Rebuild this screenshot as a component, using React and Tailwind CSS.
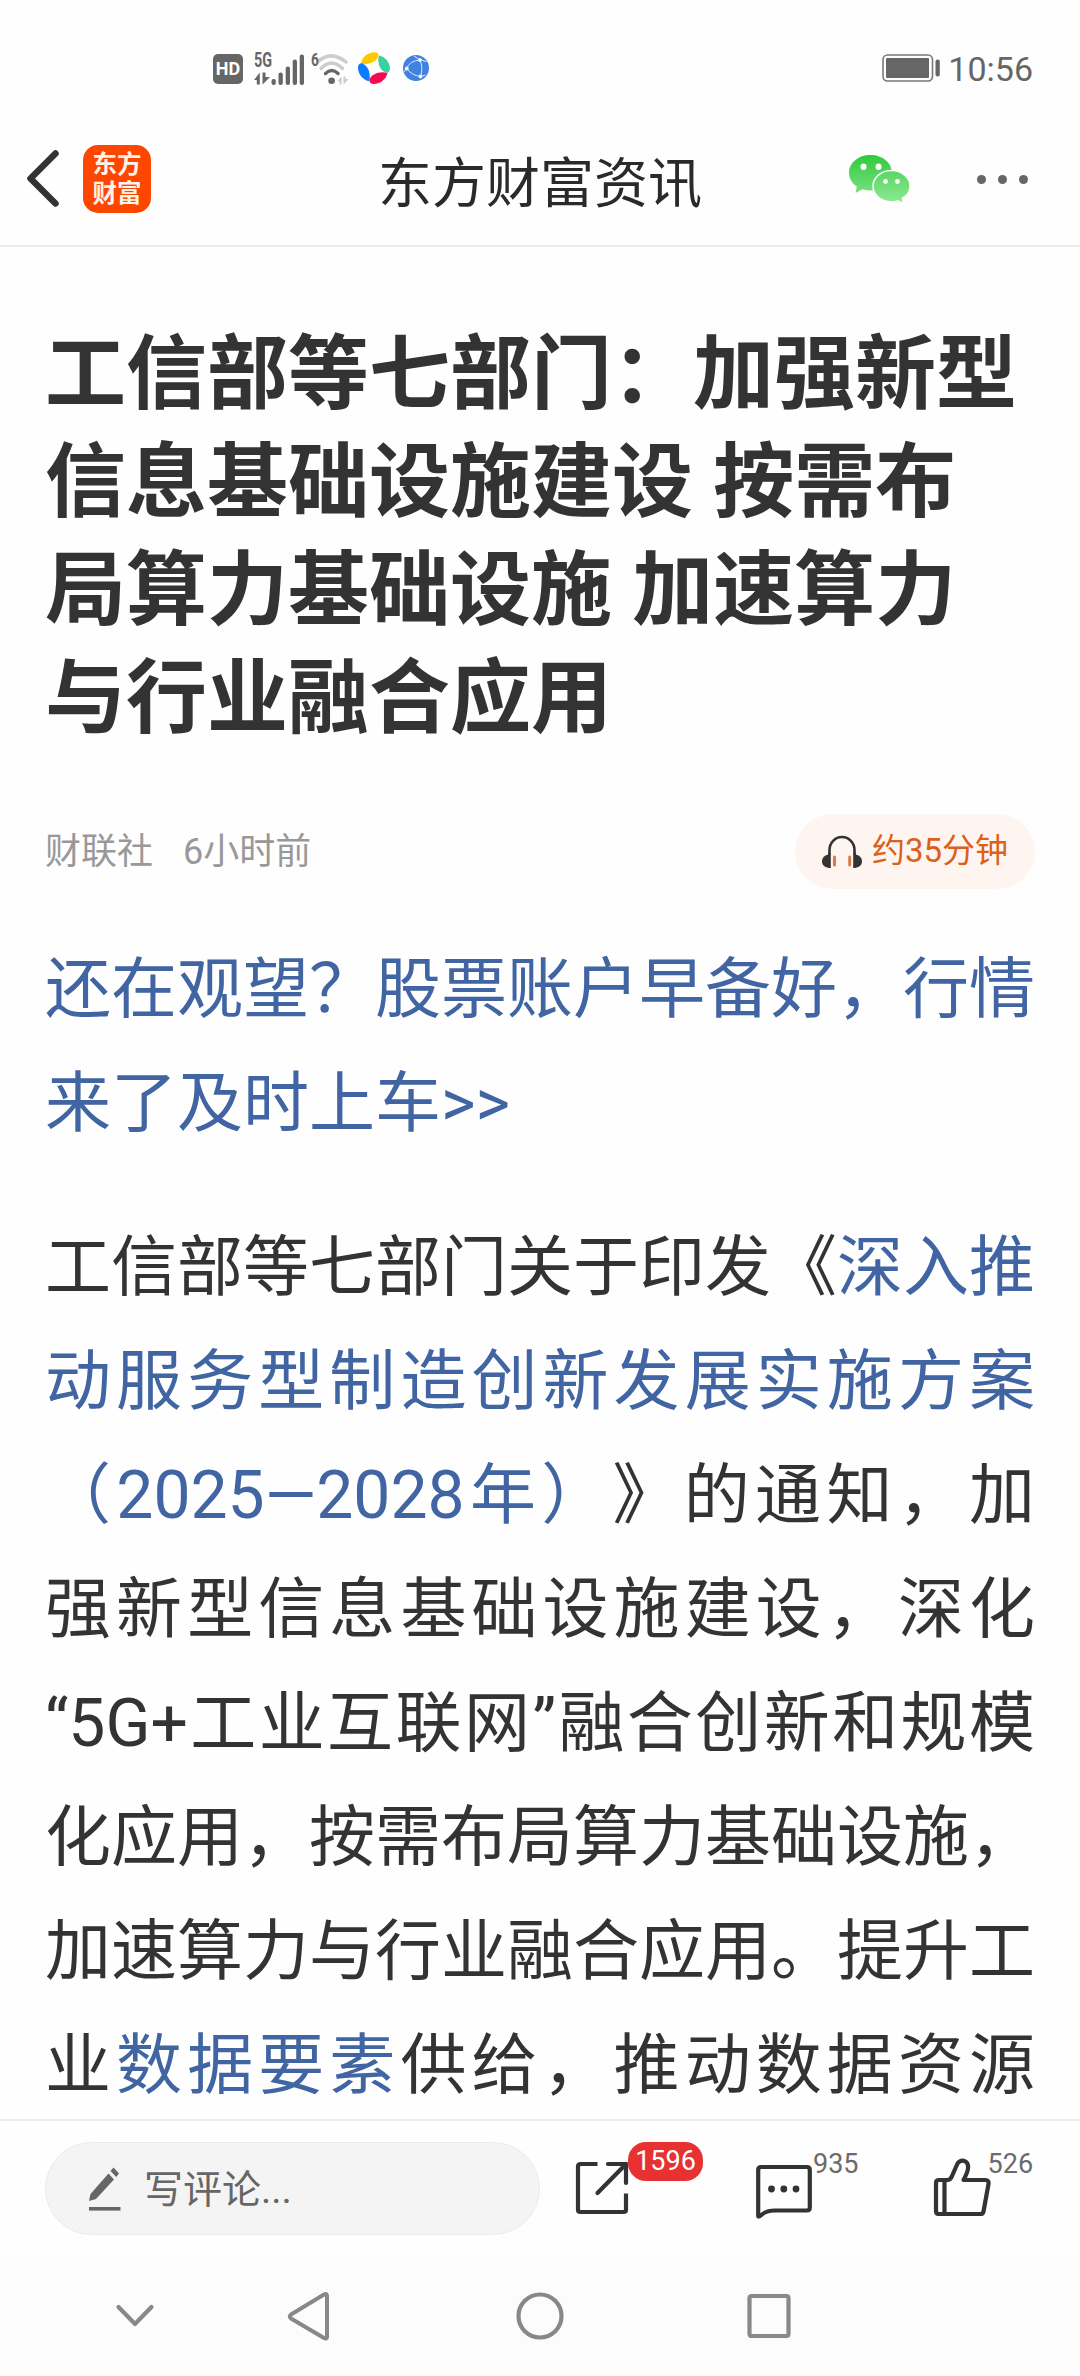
function SignalIcons() {
  return (
    <svg width="64" height="40" viewBox="0 0 64 40" fill="#666">
      <path d="M0 30L5.800 22.500V34.500H2.800V30zM8.500 22.500v12l7.500-7.500h-4.500V22.500z" />
      <rect x="17.500" y="29" width="4.300" height="6" rx="2" />
      <rect x="24.500" y="22.500" width="4.300" height="12.500" rx="2" />
      <rect x="31.700" y="16.500" width="4.300" height="18.500" rx="2" />
      <rect x="38.700" y="9.500" width="4.300" height="25.500" rx="2" />
      <rect x="45.700" y="4.500" width="4.300" height="30.500" rx="2" />
    </svg>
  );
}

function WifiIcon() {
  return (
    <svg width="34" height="32" viewBox="0 0 34 32" fill="none" strokeWidth="3.400" strokeLinecap="round">
      <path d="M3 7.500Q16 -4 31 8" stroke="#ccc" />
      <path d="M6 14.500Q16.500 3.500 27.500 14.500" stroke="#ccc" />
      <path d="M10.500 19.500Q16.800 13.500 23 19.500" stroke="#666" />
      <circle cx="16.600" cy="26.700" r="3.300" fill="#666" />
      <path d="M22 27.500l4.500-5v8h-2v-3.500zM28.500 22.500v8l5-5.500h-3v-2.500z" fill="#ccc" />
    </svg>
  );
}

function PinwheelIcon() {
  return (
    <svg width="34" height="34" viewBox="0 0 34 34">
      <path d="M4 12.500C5 6 10.500 1.500 17.500 1.300q5 .2 3.800 4.200Q19.500 10 14 12 8 14 4 12.500z" fill="#ffc800" />
      <path d="M22 4.500c6.500 1.500 10.800 7 11 13q-.5 5-4.500 4Q24 19.500 22 14 20.500 8 22 4.500z" fill="#3ad0a0" />
      <path d="M30.500 22C29 28.500 23.500 32.800 16.500 33q-5-.5-4-5Q14.500 24 20 22 26 20.500 30.500 22z" fill="#f5094f" />
      <path d="M12 30.200C5 28.500 1.200 23 1 16.500q.5-5 4.500-4Q10 14.500 12 20 13.500 26 12 30.200z" fill="#0a7cff" />
    </svg>
  );
}

function GlobeIcon() {
  return (
    <svg width="28" height="28" viewBox="0 0 28 28" fill="none" stroke="#dbe9ff" strokeWidth="1">
      <circle cx="14" cy="14" r="13" fill="#3f82e0" stroke="none" />
      <path d="M18 6Q8 6.500 4.500 14.500 10 21.500 18.500 22.500M18 6Q21.500 14 18.500 22.500M18 6L12 2M18 6l6.500 1.500M4.500 14.500L2 18M18.500 22.500l5-1.500" />
      <circle cx="18" cy="6" r="1.600" fill="#fff" />
      <circle cx="4.800" cy="14.500" r="1.600" fill="#fff" />
      <circle cx="18.500" cy="22.500" r="1.600" fill="#fff" />
    </svg>
  );
}

function StatusBar() {
  return (
    <div className="flex h-[108px] items-start pt-[50px] text-[#666]">
      <div className="ml-[213px] mt-[4px] flex h-[30px] w-[30px] items-center justify-center rounded-[5px] bg-[#666] text-[18px] font-bold leading-none text-white">
        HD
      </div>
      <div className="relative ml-[11px] h-[40px] w-[57px]">
        <SignalIcons />
        <span className="absolute left-0 top-[1px] origin-left scale-x-[0.72] text-[20px] font-bold leading-[18px]">5G</span>
      </div>
      <span className="mt-[1px] w-[8px] origin-left scale-x-[0.72] text-[19px] font-bold leading-[18px]">6</span>
      <div className="-ml-[4px] mt-[4px] h-[32px] w-[34px]"><WifiIcon /></div>
      <div className="ml-[8px] mt-[1px]"><PinwheelIcon /></div>
      <div className="ml-[11px] mt-[4px]"><GlobeIcon /></div>
      <div className="ml-auto mr-[47px] flex">
        <svg className="mt-[3px]" width="60" height="30" viewBox="0 0 60 30">
          <rect x="2" y="2" width="49.500" height="26" rx="4.500" fill="none" stroke="#777" strokeWidth="1.600" />
          <rect x="5" y="5" width="43" height="20" rx="1" fill="#666" />
          <rect x="54.500" y="6.500" width="4.300" height="17" rx="2" fill="#666" />
        </svg>
        <span className="ml-[7px] text-[34px] leading-[38px]">10:56</span>
      </div>
    </div>
  );
}

function WeChatIcon() {
  return (
    <svg width="66" height="54" viewBox="0 0 66 54">
      <defs>
        <linearGradient id="bubble-back" x1="0" y1="0" x2="0" y2="1">
          <stop offset="0" stopColor="#2fca3c" />
          <stop offset="1" stopColor="#79e080" />
        </linearGradient>
        <linearGradient id="bubble-front" x1="0" y1="0" x2="0" y2="1">
          <stop offset="0" stopColor="#5bd564" />
          <stop offset="1" stopColor="#8eea94" />
        </linearGradient>
      </defs>
      <path d="M23.500 2C11.500 2 2 9.800 2 19.700c0 5.600 3 10.600 7.800 13.800L8.500 40l7-3.800c2.500.8 5.200 1.200 8 1.200 12 0 21.500-7.900 21.500-17.700S35.500 2 23.500 2z" fill="url(#bubble-back)" />
      <path d="M44.500 17.500C34.200 17.500 26 24.500 26 33.200s8.200 15.600 18.500 15.600c2.200 0 4.300-.3 6.200-.9l6 2.900-1.300-5.300c4.700-2.900 7.700-7.300 7.700-12.300 0-8.700-8.300-15.700-18.600-15.700z" fill="url(#bubble-front)" stroke="#fff" strokeWidth="1.500" />
      <g fill="#fff">
        <ellipse cx="16.500" cy="13.700" rx="3" ry="3.200" />
        <ellipse cx="31.500" cy="13.700" rx="3" ry="3.200" />
        <circle cx="38.500" cy="28.500" r="2.400" />
        <circle cx="50.500" cy="28.500" r="2.400" />
      </g>
    </svg>
  );
}

function Header() {
  return (
    <header className="relative flex h-[139px] items-center border-b-2 border-[#ececec]">
      <svg className="ml-[24px] mt-[3px]" width="40" height="62" viewBox="0 0 40 62" fill="none" stroke="#333" strokeWidth="6.500" strokeLinecap="round" strokeLinejoin="round">
        <path d="M31.500 6.500L6.500 31.500 31.500 56.500" />
      </svg>
      <div className="ml-[19px] mt-[5px] flex h-[68px] w-[68px] flex-col items-center justify-center rounded-[15px] bg-[#fd4600] text-[24.500px] font-bold leading-[29.500px] text-[#fff3e8]">
        <span>东方</span>
        <span>财富</span>
      </div>
      <h1 className="absolute inset-x-0 top-[37px] text-center text-[54px] leading-[80px] text-[#2a2a2a]">东方财富资讯</h1>
      <div className="ml-auto mr-[64px] mt-[6px]"><WeChatIcon /></div>
      <div className="mr-[52px] mt-[6px] flex gap-[12px]">
        <i className="h-[9px] w-[9px] rounded-full bg-[#666]" />
        <i className="h-[9px] w-[9px] rounded-full bg-[#666]" />
        <i className="h-[9px] w-[9px] rounded-full bg-[#666]" />
      </div>
    </header>
  );
}

function HeadphonesIcon() {
  return (
    <svg width="42" height="34" viewBox="0 0 42 34">
      <path d="M8.500 20V15a12.500 13 0 0 1 25 0v5" fill="none" stroke="#333" strokeWidth="2.600" />
      <path d="M7.200 17.500L9.800 19.500V33C4.500 33 1 30.500 1 26.200q0-5 6.200-6.700zM34.800 17.500L32.200 19.500V33c5.300 0 8.800-2.500 8.800-6.800q0-5-6.200-6.700z" fill="#333" />
      <path d="M13.500 22v8M28.700 22v8" stroke="#dc7a4a" strokeWidth="3" strokeLinecap="round" />
    </svg>
  );
}

function Article() {
  return (
    <main className="h-[1872px] overflow-hidden px-[45px] pt-[74px] text-[#333] [text-spacing-trim:space-all]">
      <h2 className="text-[81px] font-bold leading-[108px]">
        工信部等七部门：加强新型信息基础设施建设 按需布局算力基础设施 加速算力与行业融合应用
      </h2>
      <div className="mt-[61px] flex h-[75px] items-center text-[36px] text-[#999]">
        <span>财联社</span>
        <span className="ml-[30px]">6小时前</span>
        <div className="ml-auto flex h-[75px] w-[240px] items-center rounded-full bg-[#fef5f1] pl-[26px] text-[33px] text-[#dd5f1c]">
          <HeadphonesIcon />
          <span className="-mt-[2px] ml-[9px]">约35分钟</span>
        </div>
      </div>
      <p className="mt-[44px] text-justify text-[66px] leading-[114px] text-[#4165a2]">
        还在观望？股票账户早备好，行情来了及时上车&gt;&gt;
      </p>
      <p className="mt-[50px] text-justify text-[66px] leading-[114px] [text-align-last:justify]">
        工信部等七部门关于印发《<a className="text-[#4165a2]">深入推动服务型制造创新发展实施方案（2025—2028年）</a>》的通知，加强新型信息基础设施建设，深化“5G+工业互联网”融合创新和规模化应用，按需布局算力基础设施，加速算力与行业融合应用。提升工业<a className="text-[#4165a2]">数据要素</a>供给，推动数据资源
      </p>
    </main>
  );
}

function PencilIcon() {
  return (
    <svg width="34" height="46" viewBox="0 0 34 46" fill="#666">
      <path d="M25.500 1.500l5.500 6-2.700 3.500-5.800-6zM20.500 7.500l5.500 6L8 33l-7 2L2.500 28z" />
      <rect x="1" y="41" width="31.500" height="3.600" />
    </svg>
  );
}

function ShareIcon() {
  return (
    <svg width="54" height="54" viewBox="0 0 54 54" fill="none" stroke="#333" strokeWidth="4.200" strokeLinejoin="round">
      <path d="M22.500 3H5.500Q3 3 3 5.500v43Q3 51 5.500 51h43q2.500 0 2.500-2.500V32.500" />
      <path d="M33 3h18v19" strokeLinecap="round" />
      <path d="M51 3L22.500 32" strokeLinecap="round" />
    </svg>
  );
}

function CommentIcon() {
  return (
    <svg width="58" height="56" viewBox="0 0 58 56" fill="none" stroke="#333" strokeWidth="4.200" strokeLinejoin="round">
      <path d="M3.200 52V6q0-3 3-3h45.600q3 0 3 3v37.500q0 3-3 3H20Q11 46.500 6 51.300q-2.800 2-2.800.7z" />
      <g fill="#333" stroke="none">
        <circle cx="16.500" cy="25" r="3.400" />
        <circle cx="28.800" cy="25" r="3.400" />
        <circle cx="41" cy="25" r="3.400" />
      </g>
    </svg>
  );
}

function LikeIcon() {
  return (
    <svg width="58" height="58" viewBox="0 0 58 58" fill="none" stroke="#333" strokeWidth="4.200" strokeLinejoin="round">
      <path d="M14.500 22H6q-3 0-3 3v28q0 3 3 3h41.500q2.500 0 3-2.500l5-27.500q.5-4-3-4H30.500C35 14 37 6.500 32.500 3.500Q28 1 24.500 5.500L19 18q-1.500 4-4.500 4z" />
      <path d="M11.500 22v34" />
    </svg>
  );
}

function BottomBar() {
  return (
    <footer className="flex h-[137px] items-start border-t-2 border-[#ededed] pl-[45px] pt-[21px]">
      <div className="flex h-[93px] w-[495px] shrink-0 items-center rounded-full border border-[#ebebeb] bg-[#f4f4f4] pl-[42px] text-[39px] text-[#666]">
        <PencilIcon />
        <span className="ml-[22px] mt-[3px]">写评论...</span>
      </div>
      <div className="flex">
        <div className="ml-[35px] mt-[19px]"><ShareIcon /></div>
        <span className="-ml-px h-[39px] w-[75px] rounded-[18px] bg-[#e83131] text-center text-[27px] leading-[39px] text-white">1596</span>
      </div>
      <div className="ml-[52px] flex">
        <div className="mt-[22px]"><CommentIcon /></div>
        <span className="mt-[2px] text-[27px] leading-[40px] text-[#6a6a6a]">935</span>
      </div>
      <div className="ml-[74px] flex">
        <div className="mt-[16px]"><LikeIcon /></div>
        <span className="-ml-[3px] mt-[2px] text-[27px] leading-[40px] text-[#6a6a6a]">526</span>
      </div>
    </footer>
  );
}

function NavBar() {
  return (
    <nav className="flex h-[120px] items-center bg-[#fcfcfc] text-[#888]">
      <svg className="ml-[113px]" width="44" height="50" viewBox="0 0 44 50" fill="none" stroke="currentColor" strokeWidth="4.200" strokeLinecap="round" strokeLinejoin="round">
        <path d="M5.500 16L22 33 38.500 16" />
      </svg>
      <svg className="ml-[128px]" width="48" height="50" viewBox="0 0 48 50" fill="none" stroke="currentColor" strokeWidth="4" strokeLinejoin="round">
        <path d="M39 3.500Q42 2 42 5V46q0 2.500-3 1L6 27.500Q3.500 25.500 6 23.500z" />
      </svg>
      <svg className="ml-[182px]" width="50" height="50" viewBox="0 0 50 50" fill="none" stroke="currentColor" strokeWidth="4.200">
        <circle cx="25" cy="25" r="21.500" />
      </svg>
      <svg className="ml-[179px]" width="50" height="50" viewBox="0 0 50 50" fill="none" stroke="currentColor" strokeWidth="4.200">
        <rect x="5.500" y="5" width="39" height="40" rx="2" />
      </svg>
    </nav>
  );
}

export default function App() {
  return (
    <div lang="zh-CN" className="h-[2376px] w-[1080px] overflow-hidden bg-[#fefefe] font-[Roboto,'Noto_Sans_CJK_SC',sans-serif]">
      <StatusBar />
      <Header />
      <Article />
      <BottomBar />
      <NavBar />
    </div>
  );
}
